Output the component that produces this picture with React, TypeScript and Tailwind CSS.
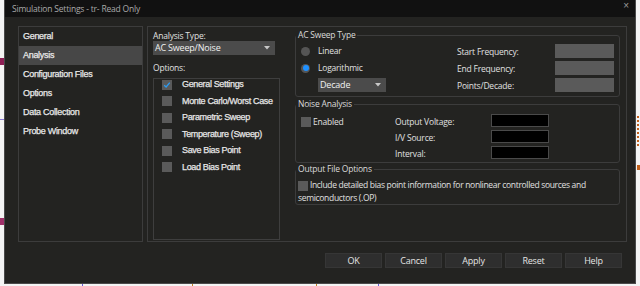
import React from 'react';

const ui = "font-['Open_Sans','Noto_Sans',sans-serif] tracking-[-0.2px]";
const arial = "font-['Liberation_Sans',Arial,sans-serif] [-webkit-text-stroke:0.25px_#e6e6e6]";

function Check({ checked = false }: { checked?: boolean }) {
  return (
    <span className="inline-flex w-[10px] h-[10px] shrink-0 items-center justify-center bg-[#5a5a5a] align-middle">
      {checked && (
        <svg width="8" height="8" viewBox="0 0 8 8">
          <path d="M1.2 4.2 L3.1 6 L6.8 1.6" stroke="#2d9bf0" strokeWidth="1.3" fill="none" />
        </svg>
      )}
    </span>
  );
}

function Radio({ checked = false }: { checked?: boolean }) {
  return (
    <span className="flex w-[9px] h-[9px] shrink-0 items-center justify-center rounded-full bg-[#555555]">
      {checked && <span className="w-[6px] h-[6px] rounded-full bg-[#1e90ff]" />}
    </span>
  );
}

function Dropdown({ value, className }: { value: string; className: string }) {
  return (
    <div className={`flex items-center justify-between bg-[#4b4b4b] pl-[2px] pr-[5px] text-[9px] leading-[14px] text-[#f0f0f0] ${ui} ${className}`}>
      <span>{value}</span>
      <svg width="6" height="4" viewBox="0 0 6 4">
        <path d="M0 0 L6 0 L3 3.5 Z" fill="#c8c8c8" />
      </svg>
    </div>
  );
}

function Legend({ children }: { children: React.ReactNode }) {
  return <legend className={`px-[2px] text-[8.5px] leading-[12px] text-[#dadada] ${ui}`}>{children}</legend>;
}

const navItems = ['General', 'Analysis', 'Configuration Files', 'Options', 'Data Collection', 'Probe Window'];
const options = [
  { label: 'General Settings', checked: true },
  { label: 'Monte Carlo/Worst Case' },
  { label: 'Parametric Sweep' },
  { label: 'Temperature (Sweep)' },
  { label: 'Save Bias Point' },
  { label: 'Load Bias Point' },
];

export default function App() {
  return (
    <div className="relative w-[640px] h-[286px] overflow-hidden bg-[#f4f4f4]">
      {/* schematic peeking out behind the dialog */}
      <span className="absolute left-0 top-[58px] w-[4px] h-[7px] bg-[#8e1f55]" />
      <span className="absolute left-0 top-[119px] w-[4px] h-[1px] bg-[#8a7ad8]" />
      <span className="absolute left-0 top-[218px] w-[4px] h-[7px] bg-[#a0306a]" />
      <span className="absolute right-0 top-[116px] w-[3px] h-[30px] border-l-2 border-dotted border-[#c0601c]" />
      <span className="absolute right-0 top-[165px] w-[3px] h-[5px] bg-[#c0601c]" />
      <span className="absolute left-[82px] bottom-0 w-[1px] h-[2px] bg-[#6a5ad8]" />
      <span className="absolute left-[192px] bottom-0 w-[1px] h-[2px] bg-[#c08020]" />
      <span className="absolute left-[316px] bottom-0 w-[1px] h-[2px] bg-[#c08020]" />
      <span className="absolute left-[378px] bottom-0 w-[1px] h-[2px] bg-[#6a5ad8]" />

      <div className="ml-[4px] flex w-[632px] h-[284px] flex-col border-x border-b border-[#4a4a4a] bg-[#232321]">
        <div className="flex h-[17px] items-center justify-between bg-[#111111] pl-[7px] pr-[6px]">
          <span className={`text-[8.5px] leading-[11px] text-[#a9a9a9] ${ui}`}>Simulation Settings - tr- Read Only</span>
          <span className={`text-[10px] leading-[10px] text-[#9a9a9a] -mt-[6px] font-['Liberation_Sans',Arial,sans-serif]`}>×</span>
        </div>

        <div className="flex gap-[4px] pl-[13px] pt-[9px]">
          {/* navigation */}
          <div className="flex h-[216px] w-[125px] flex-col border border-[#3c3c3c]">
            {navItems.map((item) => (
              <div
                key={item}
                className={`flex h-[19px] items-center pl-[4px] text-[9px] tracking-[-0.3px] text-[#ececec] ${arial} ${item === 'Analysis' ? 'bg-[#474747]' : ''}`}
              >
                {item}
              </div>
            ))}
          </div>

          {/* analysis page */}
          <div className="flex h-[216px] w-[480px] gap-[15px] border border-[#3c3c3c] pl-[5px]">
            <div className="flex w-[127px] flex-col pt-[3px]">
              <div className={`text-[8.5px] leading-[11px] text-[#e0e0e0] ${ui}`}>Analysis Type:</div>
              <Dropdown value="AC Sweep/Noise" className="w-[122px] h-[14px]" />
              <div className={`mt-[7px] text-[8.5px] leading-[11px] text-[#e0e0e0] ${ui}`}>Options:</div>
              <div className="mt-[5px] flex h-[162px] flex-col gap-[5.6px] border border-[#3e3e3e] pl-[8px]">
                {options.map((o) => (
                  <div key={o.label} className="flex h-[11px] items-center gap-[10px]">
                    <Check checked={o.checked} />
                    <span className={`text-[9px] leading-[11px] tracking-[-0.35px] text-[#e6e6e6] ${arial}`}>{o.label}</span>
                  </div>
                ))}
              </div>
            </div>

            <div className="flex w-[325px] flex-col pt-[2px]">
              <fieldset className="rounded-[3px] border border-[#3c3c3c] pb-[4px]">
                <Legend>AC Sweep Type</Legend>
                <div className={`grid grid-cols-[156px_98px_59px] grid-rows-[14px_14px_14px] gap-y-[3px] pl-[5px] pt-[3px] text-[8.5px] leading-[12px] text-[#e0e0e0] ${ui}`}>
                  <div className="flex items-center gap-[8px]">
                    <Radio />
                    <span>Linear</span>
                  </div>
                  <div className="self-end">Start Frequency:</div>
                  <div className="bg-[#5a5a5a]" />
                  <div className="flex items-center gap-[8px]">
                    <Radio checked />
                    <span>Logarithmic</span>
                  </div>
                  <div className="self-end">End Frequency:</div>
                  <div className="bg-[#5a5a5a]" />
                  <div className="pl-[17px]">
                    <Dropdown value="Decade" className="w-[68px] h-[14px]" />
                  </div>
                  <div className="self-end">Points/Decade:</div>
                  <div className="bg-[#5a5a5a]" />
                </div>
              </fieldset>

              <fieldset className="mt-[1px] rounded-[3px] border border-[#3c3c3c] pb-[3px]">
                <Legend>Noise Analysis</Legend>
                <div className={`grid grid-cols-[94px_96px_58px] grid-rows-[13px_13px_13px] gap-y-[3px] pl-[5px] pt-[4px] text-[8.5px] leading-[11px] text-[#e0e0e0] ${ui}`}>
                  <div className="flex items-end gap-[2px]">
                    <Check />
                    <span>Enabled</span>
                  </div>
                  <div className="self-end">Output Voltage:</div>
                  <div className="border border-[#4a4a4a] bg-black" />
                  <div />
                  <div className="self-end">I/V Source:</div>
                  <div className="border border-[#4a4a4a] bg-black" />
                  <div />
                  <div className="self-end">Interval:</div>
                  <div className="border border-[#4a4a4a] bg-black" />
                </div>
              </fieldset>

              <fieldset className="rounded-[3px] border border-[#3c3c3c]">
                <Legend>Output File Options</Legend>
                <p className={`pl-[2px] pt-[3px] text-[8.5px] leading-[13px] tracking-[-0.32px] text-[#e0e0e0] font-['Open_Sans','Noto_Sans',sans-serif]`}>
                  <Check /> Include detailed bias point information for nonlinear controlled sources and semiconductors (.OP)
                </p>
              </fieldset>
            </div>
          </div>
        </div>

        <div className="mt-[11px] flex justify-end gap-[3px] pr-[13px]">
          {['OK', 'Cancel', 'Apply', 'Reset', 'Help'].map((b) => (
            <button
              key={b}
              className={`h-[15px] w-[57px] border border-[#363636] bg-[#2e2e2e] text-[9px] leading-[13px] text-[#e4e4e4] ${ui}`}
            >
              {b}
            </button>
          ))}
        </div>
      </div>
    </div>
  );
}
